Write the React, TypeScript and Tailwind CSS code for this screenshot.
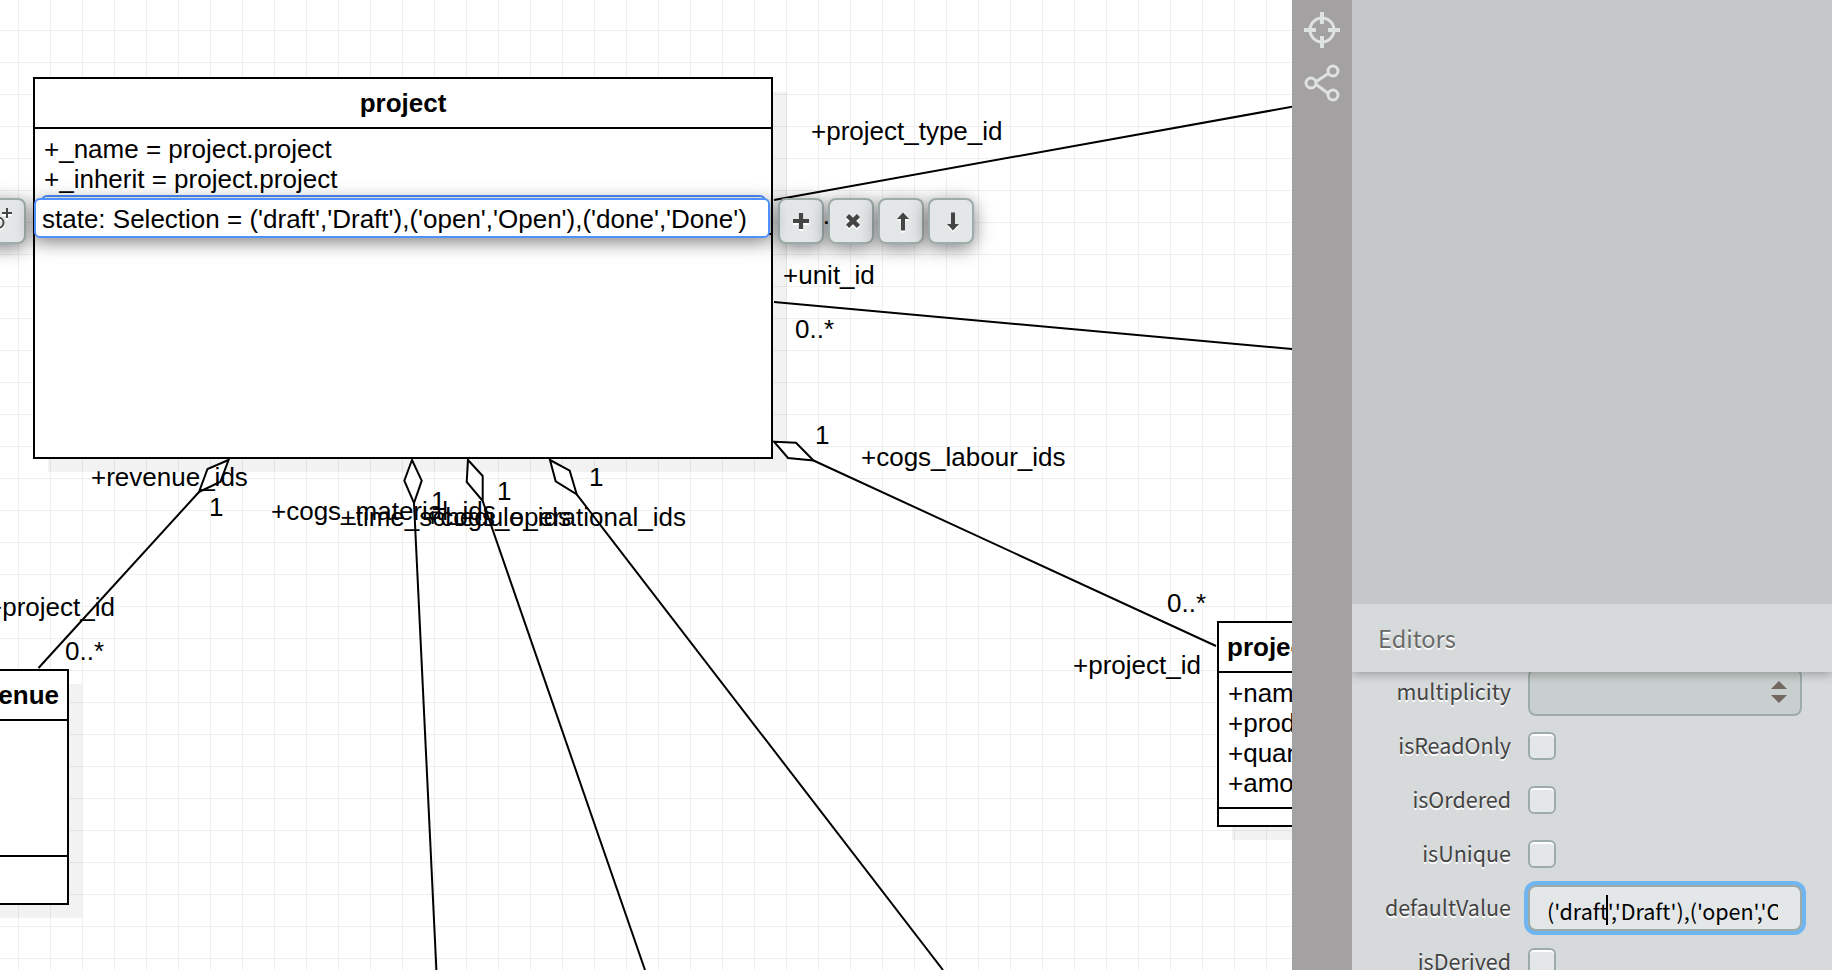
import React from "react";

const diagramFont = "font-['Liberation_Sans',Arial,sans-serif] text-[26px] leading-[30px] whitespace-pre text-black";
const panelFont = "font-['Noto_Sans_CJK_SC',sans-serif]";

type LabelProps = { x: number; baseline: number; children: string };

function Label({ x, baseline, children }: LabelProps) {
  return (
    <span className="absolute" style={{ left: x, top: baseline - 24 }}>
      {children}
    </span>
  );
}

const labels: [number, number, string][] = [
  [811, 140, "+project_type_id"],
  [801, 224, "0..*"],
  [783, 284, "+unit_id"],
  [795, 338, "0..*"],
  [815, 444, "1"],
  [861, 466, "+cogs_labour_ids"],
  [1167, 612, "0..*"],
  [1073, 674, "+project_id"],
  [91, 486, "+revenue_ids"],
  [209, 516, "1"],
  [271, 520, "+cogs_material_ids"],
  [340.5, 526, "+time_schedule_ids"],
  [425, 526, "+cogs_operational_ids"],
  [431, 510, "1"],
  [497, 500, "1"],
  [589, 486, "1"],
  [-13, 616, "+project_id"],
  [65, 660, "0..*"],
];

function Connectors() {
  return (
    <svg className="absolute left-0 top-0" width="1292" height="970" fill="none" stroke="#000" strokeWidth="2">
      <path d="M774 200 1294 106.4" />
      <path d="M774 302 1294 349.2" />
      <path d="M813.5 460.5 1216 646" />
      <path d="M199 492 38.5 668" />
      <path d="M414 503 436.4 970" />
      <path d="M482.7 501 645 970" />
      <path d="M576.7 494.3 943 970" />
      <g fill="#fff">
        <path d="M774 441.7 796 442.7 813.5 460.5 788 458Z" />
        <path d="M228.5 460 207.5 469 199 492 220.5 481.7Z" />
        <path d="M412 460 421.7 480.7 414 503 404.3 480.7Z" />
        <path d="M468 460 482.7 476 482.7 501 466.7 482Z" />
        <path d="M550 460 569.7 470.7 576.7 494.3 555.7 481.3Z" />
      </g>
    </svg>
  );
}

function QuickButton({ children }: { children: React.ReactNode }) {
  return (
    <button className="h-[46px] w-[46px] shrink-0 rounded-[8px] border-2 border-[#9dacaa] bg-[#e3e7e8] shadow-[0_4px_18px_rgba(0,0,0,0.5)]">
      <svg width="42" height="42" viewBox="0 0 42 42" className="drop-shadow-[0_2px_0_#fff]">
        {children}
      </svg>
    </button>
  );
}

function Canvas() {
  return (
    <main
      className={`relative h-full w-[1292px] shrink-0 overflow-hidden bg-white bg-[linear-gradient(to_right,#efefef_1px,transparent_1px),linear-gradient(to_bottom,#efefef_1px,transparent_1px)] bg-[length:32px_32px] bg-[position:18px_30px] ${diagramFont}`}
    >
      <div className="absolute left-[48px] top-[92px] h-[380px] w-[739px] bg-black/5" />
      <div className="absolute left-[-200px] top-[684px] h-[234px] w-[282px] bg-black/5" />
      <div className="absolute left-[1232px] top-[636px] h-[204px] w-[300px] bg-black/5" />

      <section className="absolute left-[33px] top-[77px] flex h-[382px] w-[740px] flex-col border-2 border-black bg-white">
        <h2 className="h-[50px] border-b-2 border-black pt-[9px] text-center font-bold">project</h2>
        <div className="flex flex-col pl-[9px] pt-[5px]">
          <span>+_name = project.project</span>
          <span>+_inherit = project.project</span>
        </div>
      </section>

      <section className="absolute left-[-160px] top-[669px] flex h-[236px] w-[229px] flex-col border-2 border-black bg-white">
        <h2 className="h-[50px] border-b-2 border-black pr-[8px] pt-[9px] text-right font-bold">project_revenue</h2>
        <div className="h-[136px] border-b-2 border-black" />
      </section>

      <section className="absolute left-[1217px] top-[621px] flex h-[206px] w-[280px] flex-col border-2 border-black bg-white">
        <h2 className="h-[50px] border-b-2 border-black pl-[8px] pt-[9px] font-bold">project_cogs_labour</h2>
        <div className="flex h-[136px] flex-col border-b-2 border-black pl-[9px] pt-[5px]">
          <span>+name</span>
          <span>+product_id</span>
          <span>+quantity</span>
          <span>+amount</span>
        </div>
      </section>

      <Connectors />
      {labels.map(([x, baseline, text], i) => (
        <Label key={i} x={x} baseline={baseline}>
          {text}
        </Label>
      ))}

      <div className="absolute left-[41px] top-[195px] h-[38px] w-[725px] rounded-[6px] border-2 border-[#4d90fe]" />
      <div className="absolute left-[768px] top-[233px] h-[2px] w-[4px] bg-black" />
      <div className="absolute left-[-20px] top-[198px] flex">
        <QuickButton>
          <circle cx="16.500" cy="22.800" r="5" fill="none" stroke="#444" strokeWidth="2" />
          <path d="M25 8V18M20 13H30" stroke="#444" strokeWidth="2" fill="none" />
        </QuickButton>
      </div>
      <div className="absolute left-[778px] top-[198px] flex gap-[4px]">
        <QuickButton>
          <path d="M21 13V29M13 21H29" stroke="#444" strokeWidth="4.200" fill="none" />
        </QuickButton>
        <QuickButton>
          <path d="M17.600 15.600 28.400 26.400M28.400 15.600 17.600 26.400" stroke="#444" strokeWidth="4.400" fill="none" />
        </QuickButton>
        <QuickButton>
          <path d="M23 12.500 29 19H25V30.500H21V19H17Z" fill="#444" />
        </QuickButton>
        <QuickButton>
          <path d="M23 30.500 29 24H25V12.500H21V24H17Z" fill="#444" />
        </QuickButton>
      </div>
      <div className="absolute left-[34px] top-[198px] h-[40px] w-[736px] rounded-[6px] border-2 border-[#4d90fe] bg-white pl-[6px] pt-[4px] shadow-[0_4px_18px_rgba(0,0,0,0.5)]">
        state: Selection = ('draft','Draft'),('open','Open'),('done','Done')
      </div>
    </main>
  );
}

function Toolbar() {
  return (
    <nav className="flex h-full w-[60px] shrink-0 flex-col items-center bg-[#a4a1a2] pt-[12px]">
      <svg width="36" height="36" viewBox="0 0 36 36" fill="none" stroke="#dfe2e2">
        <circle cx="18" cy="18" r="12" strokeWidth="3" />
        <path d="M18 0v12M18 24v12M0 18h12M24 18h12" strokeWidth="4" />
      </svg>
      <svg className="mt-[16px]" width="36" height="38" viewBox="0 0 36 38" fill="none" stroke="#dfe2e2" strokeWidth="3">
        <circle cx="7" cy="19" r="5" />
        <circle cx="29" cy="7" r="5" />
        <circle cx="29" cy="31" r="5" />
        <path d="M11.500 18 25 9M11.500 20 25 30" />
      </svg>
    </nav>
  );
}

function Row({ name, children }: { name: string; children: React.ReactNode }) {
  return (
    <div className="flex h-[54px] shrink-0 items-center">
      <span className="-mt-[2px] mr-[17px] w-[159px] text-right text-[21.500px] leading-[30px] text-[#444] [text-shadow:0_2px_0_#fff]">{name}</span>
      {children}
    </div>
  );
}

function Check() {
  return <span className="h-[28px] w-[28px] rounded-[6px] border-2 border-[#9dacaa] bg-[#e3e7e8] shadow-[inset_0_2px_0_#fff]" />;
}

function Panel() {
  return (
    <aside className={`flex h-full w-[480px] shrink-0 flex-col bg-[#c4c8c9] ${panelFont}`}>
      <div className="h-[604px] shrink-0" />
      <header className="z-10 flex h-[68px] shrink-0 items-center bg-[#d6dadb] pl-[26px] pt-[2px] text-[23.600px] text-[#6a6a6a] shadow-[0_2px_10px_rgba(0,0,0,0.3)] [clip-path:inset(0_0_-20px_0)] [text-shadow:0_2px_0_#fff]">
        Editors
      </header>
      <div className="flex min-h-0 flex-1 flex-col overflow-hidden bg-[#d6dadb]">
        <div className="-mt-[7px] flex flex-col">
          <Row name="multiplicity">
            <span className="flex h-[48px] w-[274px] items-center justify-end rounded-[8px] border-2 border-[#9dacaa] bg-[#c9cfce] pr-[13px]">
              <svg width="16" height="22" viewBox="0 0 16 22" fill="#736860">
                <path d="M8 0 16 8H0ZM8 22 16 14H0Z" />
              </svg>
            </span>
          </Row>
          <Row name="isReadOnly"><Check /></Row>
          <Row name="isOrdered"><Check /></Row>
          <Row name="isUnique"><Check /></Row>
          <Row name="defaultValue">
            <span className="relative flex h-[46px] w-[274px] items-center rounded-[8px] border-2 border-[#9dacaa] bg-[#e3e7e8] pl-[17px] pr-[22px] shadow-[0_0_0_4px_#6fb5f2]">
              <span className="mt-[6px] overflow-hidden whitespace-pre text-[21.500px] leading-[30px] text-black">('draft','Draft'),('open','Open')</span>
              <span className="absolute left-[76px] top-[8px] h-[30px] w-[2px] bg-black" />
            </span>
          </Row>
          <Row name="isDerived"><Check /></Row>
        </div>
      </div>
    </aside>
  );
}

export default function App() {
  return (
    <div className="flex h-[970px] w-[1832px] overflow-hidden">
      <Canvas />
      <Toolbar />
      <Panel />
    </div>
  );
}
